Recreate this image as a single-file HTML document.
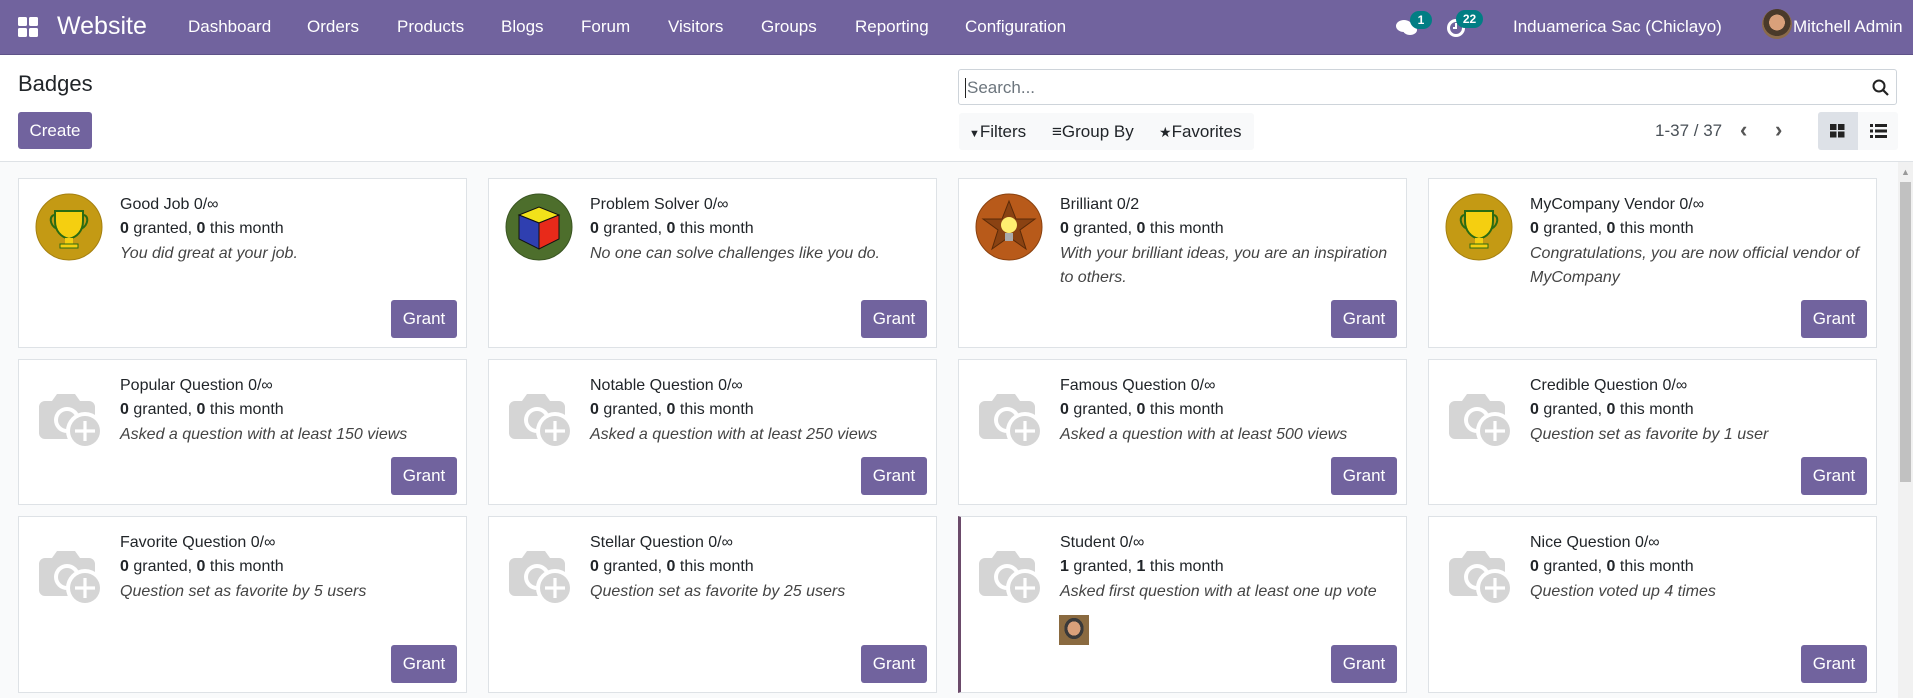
<!DOCTYPE html>
<html><head><meta charset="utf-8">
<style>
*{box-sizing:border-box;margin:0;padding:0}
body{width:1913px;height:698px;overflow:hidden;font-family:"Liberation Sans",sans-serif;background:#f9fafb;position:relative;color:#212529}
.nav{position:absolute;left:0;top:0;width:1913px;height:55px;background:#71639e;border-bottom:1px solid #5e5288;color:#fff}
.nav span{position:absolute;top:17px;font-size:17px;white-space:nowrap}
.cp{position:absolute;left:0;top:55px;width:1913px;height:107px;background:#fff;border-bottom:1px solid #dee2e6}
.btn{position:absolute;background:#71639e;color:#fff;border-radius:3px;font-size:17px;text-align:center}
.card{position:absolute;background:#fff;border:1px solid #dee2e6;width:449px}
.card .t{position:absolute;left:101px;top:14px;font-size:16px;line-height:24.3px;width:338px}
.card i{font-style:italic;color:#444}
.card .g{right:9px;bottom:9px;width:66px;height:38px;line-height:38px}
.card .im{position:absolute;left:16px;top:14px;width:68px;height:68px}
.card .ph{position:absolute;left:20px;top:26px;width:64px;height:64px}
.sb{position:absolute;left:1898px;top:162px;width:15px;height:536px;background:#f1f1f1}
</style></head><body>
<svg width="0" height="0" style="position:absolute"><defs><symbol id="cam" viewBox="0 0 64 64"><path d="M18 8h18l5 7h9a6 6 0 0 1 6 6v26a6 6 0 0 1-6 6H6a6 6 0 0 1-6-6V21a6 6 0 0 1 6-6h7z" fill="#d5d5d5"/><circle cx="28" cy="34" r="13" fill="#fff"/><circle cx="28" cy="34" r="9" fill="#d5d5d5"/><circle cx="46" cy="45" r="19" fill="#fff"/><circle cx="46" cy="45" r="15" fill="#d5d5d5"/><path d="M46 35v20M36 45h20" stroke="#fff" stroke-width="3.2"/></symbol></defs></svg>
<div class="nav">
<svg style="position:absolute;left:18px;top:17px" width="20" height="20"><rect x="0" y="0" width="9" height="9" rx="1.5" fill="#fff"/><rect x="11" y="0" width="9" height="9" rx="1.5" fill="#fff"/><rect x="0" y="11" width="9" height="9" rx="1.5" fill="#fff"/><rect x="11" y="11" width="9" height="9" rx="1.5" fill="#fff"/></svg>
<span style="left:57px;top:12px;font-size:25px">Website</span>
<span style="left:188px">Dashboard</span><span style="left:307px">Orders</span><span style="left:397px">Products</span><span style="left:501px">Blogs</span><span style="left:581px">Forum</span><span style="left:668px">Visitors</span><span style="left:761px">Groups</span><span style="left:855px">Reporting</span><span style="left:965px">Configuration</span>
<svg style="position:absolute;left:1396px;top:19px" width="22" height="18"><ellipse cx="8" cy="7" rx="8" ry="6" fill="#fff"/><ellipse cx="14" cy="11" rx="7" ry="5" fill="#fff"/></svg>
<div style="position:absolute;left:1410px;top:11px;width:22px;height:18px;border-radius:9px;background:#017e84;color:#fff;font-size:12px;font-weight:bold;text-align:center;line-height:18px">1</div>
<svg style="position:absolute;left:1446px;top:18px" width="20" height="20"><circle cx="10" cy="10" r="7.5" fill="none" stroke="#fff" stroke-width="3"/><path d="M10 5v5h-3" stroke="#fff" stroke-width="2" fill="none"/></svg>
<div style="position:absolute;left:1456px;top:10px;width:27px;height:18px;border-radius:9px;background:#017e84;color:#fff;font-size:12px;font-weight:bold;text-align:center;line-height:18px">22</div>
<span style="left:1513px">Induamerica Sac (Chiclayo)</span>
<div style="position:absolute;left:1762px;top:9px;width:30px;height:30px;border-radius:50%;background:radial-gradient(circle at 50% 45%,#d9a07a 0 35%,#4a3a2a 36% 60%,#8a6a4a 61%)"></div>
<span style="left:1793px">Mitchell Admin</span>
</div>
<div class="cp">
<div style="position:absolute;left:18px;top:16px;font-size:22px">Badges</div>
<div class="btn" style="left:18px;top:57px;width:74px;height:37px;line-height:37px">Create</div>
<div style="position:absolute;left:958px;top:14px;width:939px;height:36px;border:1px solid #ced4da;border-radius:3px"><span style="position:absolute;left:6px;top:8px;font-size:17px;color:#6c757d;border-left:1px solid #222;padding-left:1px">Search...</span>
<svg style="position:absolute;right:7px;top:9px" width="17" height="17"><circle cx="7" cy="7" r="5.5" fill="none" stroke="#222" stroke-width="2"/><path d="M11 11l5 5" stroke="#222" stroke-width="2.2"/></svg></div>
<div style="position:absolute;left:959px;top:58px;width:295px;height:37px;background:#f8f9fa;border-radius:3px;font-size:17px;line-height:37px">
<span style="position:absolute;left:10px"><span style="font-size:11px">&#9660;</span>Filters</span><span style="position:absolute;left:93px">&#8801;Group By</span><span style="position:absolute;left:200px"><span style="font-size:14px">&#9733;</span>Favorites</span></div>
<div style="position:absolute;left:1655px;top:66px;font-size:17px;color:#495057">1-37 / 37</div>
<div style="position:absolute;left:1740px;top:62px;font-size:22px;color:#555;font-weight:bold">&#8249;</div>
<div style="position:absolute;left:1775px;top:62px;font-size:22px;color:#555;font-weight:bold">&#8250;</div>
<div style="position:absolute;left:1818px;top:57px;width:80px;height:38px;background:#f8f9fa;border-radius:3px"><div style="position:absolute;left:0;top:0;width:40px;height:38px;background:#dde1e7;border-radius:3px 0 0 3px"></div>
<svg style="position:absolute;left:12px;top:12px" width="15" height="14"><rect width="6.5" height="6" fill="#222"/><rect x="8" width="6.5" height="6" fill="#222"/><rect y="7.5" width="6.5" height="6" fill="#222"/><rect x="8" y="7.5" width="6.5" height="6" fill="#222"/></svg>
<svg style="position:absolute;left:52px;top:12px" width="17" height="14"><g fill="#222"><rect width="3" height="3"/><rect x="5" width="12" height="3"/><rect y="5.5" width="3" height="3"/><rect x="5" y="5.5" width="12" height="3"/><rect y="11" width="3" height="3"/><rect x="5" y="11" width="12" height="3"/></g></svg></div>
</div>
<div class="sb"><div style="position:absolute;left:2px;top:20px;width:11px;height:300px;background:#c1c1c1"></div><div style="position:absolute;left:3px;top:5px;font-size:9px;color:#999">&#9650;</div></div>

<div class="card" style="left:18px;top:178px;height:170px"><svg class="im" viewBox="0 0 68 68"><circle cx="34" cy="34" r="33" fill="#c49a14" stroke="#a58010"/><path d="M20 18h28v10c0 10-6 16-14 18-8-2-14-8-14-18z" fill="#f5cf10" stroke="#2a6b12" stroke-width="2"/><path d="M20 22c-6 0-6 10 2 14M48 22c6 0 6 10-2 14" fill="none" stroke="#2a6b12" stroke-width="2"/><rect x="30" y="45" width="8" height="6" fill="#f5cf10"/><rect x="25" y="51" width="18" height="4" fill="#f5cf10" stroke="#2a6b12"/></svg>
<div class="t">Good Job 0/∞<br><b>0</b> granted, <b>0</b> this month<br><i>You did great at your job.</i></div><div class="btn g">Grant</div></div>
<div class="card" style="left:488px;top:178px;height:170px"><svg class="im" viewBox="0 0 68 68"><circle cx="34" cy="34" r="33" fill="#4d6e2c" stroke="#3a5522"/><path d="M14 22l20-8 20 8-20 8z" fill="#f2e21a" stroke="#111"/><path d="M14 22l20 8v26l-20-10z" fill="#2f3fb0" stroke="#111"/><path d="M34 30l20-8v24l-20 10z" fill="#e82a1a" stroke="#111"/></svg>
<div class="t">Problem Solver 0/∞<br><b>0</b> granted, <b>0</b> this month<br><i>No one can solve challenges like you do.</i></div><div class="btn g">Grant</div></div>
<div class="card" style="left:958px;top:178px;height:170px"><svg class="im" viewBox="0 0 68 68"><circle cx="34" cy="34" r="33" fill="#b85a1a" stroke="#8a4210"/><path d="M34 8l7 18h19l-15 11 6 19-17-12-17 12 6-19-15-11h19z" fill="#8a4212" stroke="#5a2a08"/><circle cx="34" cy="32" r="8" fill="#ffef70"/><rect x="30" y="40" width="8" height="8" fill="#aaa"/></svg>
<div class="t">Brilliant 0/2<br><b>0</b> granted, <b>0</b> this month<br><i>With your brilliant ideas, you are an inspiration to others.</i></div><div class="btn g">Grant</div></div>
<div class="card" style="left:1428px;top:178px;height:170px"><svg class="im" viewBox="0 0 68 68"><circle cx="34" cy="34" r="33" fill="#c49a14" stroke="#a58010"/><path d="M20 18h28v10c0 10-6 16-14 18-8-2-14-8-14-18z" fill="#f5cf10" stroke="#2a6b12" stroke-width="2"/><path d="M20 22c-6 0-6 10 2 14M48 22c6 0 6 10-2 14" fill="none" stroke="#2a6b12" stroke-width="2"/><rect x="30" y="45" width="8" height="6" fill="#f5cf10"/><rect x="25" y="51" width="18" height="4" fill="#f5cf10" stroke="#2a6b12"/></svg>
<div class="t">MyCompany Vendor 0/∞<br><b>0</b> granted, <b>0</b> this month<br><i>Congratulations, you are now official vendor of MyCompany</i></div><div class="btn g">Grant</div></div>

<div class="card" style="left:18px;top:359px;height:146px"><svg class="ph"><use href="#cam"/></svg>
<div class="t">Popular Question 0/∞<br><b>0</b> granted, <b>0</b> this month<br><i>Asked a question with at least 150 views</i></div><div class="btn g">Grant</div></div>
<div class="card" style="left:488px;top:359px;height:146px"><svg class="ph"><use href="#cam"/></svg>
<div class="t">Notable Question 0/∞<br><b>0</b> granted, <b>0</b> this month<br><i>Asked a question with at least 250 views</i></div><div class="btn g">Grant</div></div>
<div class="card" style="left:958px;top:359px;height:146px"><svg class="ph"><use href="#cam"/></svg>
<div class="t">Famous Question 0/∞<br><b>0</b> granted, <b>0</b> this month<br><i>Asked a question with at least 500 views</i></div><div class="btn g">Grant</div></div>
<div class="card" style="left:1428px;top:359px;height:146px"><svg class="ph"><use href="#cam"/></svg>
<div class="t">Credible Question 0/∞<br><b>0</b> granted, <b>0</b> this month<br><i>Question set as favorite by 1 user</i></div><div class="btn g">Grant</div></div>

<div class="card" style="left:18px;top:516px;height:177px"><svg class="ph"><use href="#cam"/></svg>
<div class="t">Favorite Question 0/∞<br><b>0</b> granted, <b>0</b> this month<br><i>Question set as favorite by 5 users</i></div><div class="btn g">Grant</div></div>
<div class="card" style="left:488px;top:516px;height:177px"><svg class="ph"><use href="#cam"/></svg>
<div class="t">Stellar Question 0/∞<br><b>0</b> granted, <b>0</b> this month<br><i>Question set as favorite by 25 users</i></div><div class="btn g">Grant</div></div>
<div class="card" style="left:958px;top:516px;height:177px;border-left:3px solid #6b4a6a"><svg class="ph" style="left:18px"><use href="#cam"/></svg>
<div class="t" style="left:99px">Student 0/∞<br><b>1</b> granted, <b>1</b> this month<br><i>Asked first question with at least one up vote</i></div>
<div style="position:absolute;left:98px;top:98px;width:30px;height:30px;background:radial-gradient(ellipse at 50% 45%,#d9a07a 0 30%,#3a3a3a 31% 45%,#8a6a40 46%)"></div>
<div class="btn g">Grant</div></div>
<div class="card" style="left:1428px;top:516px;height:177px"><svg class="ph"><use href="#cam"/></svg>
<div class="t">Nice Question 0/∞<br><b>0</b> granted, <b>0</b> this month<br><i>Question voted up 4 times</i></div><div class="btn g">Grant</div></div>
</body></html>
